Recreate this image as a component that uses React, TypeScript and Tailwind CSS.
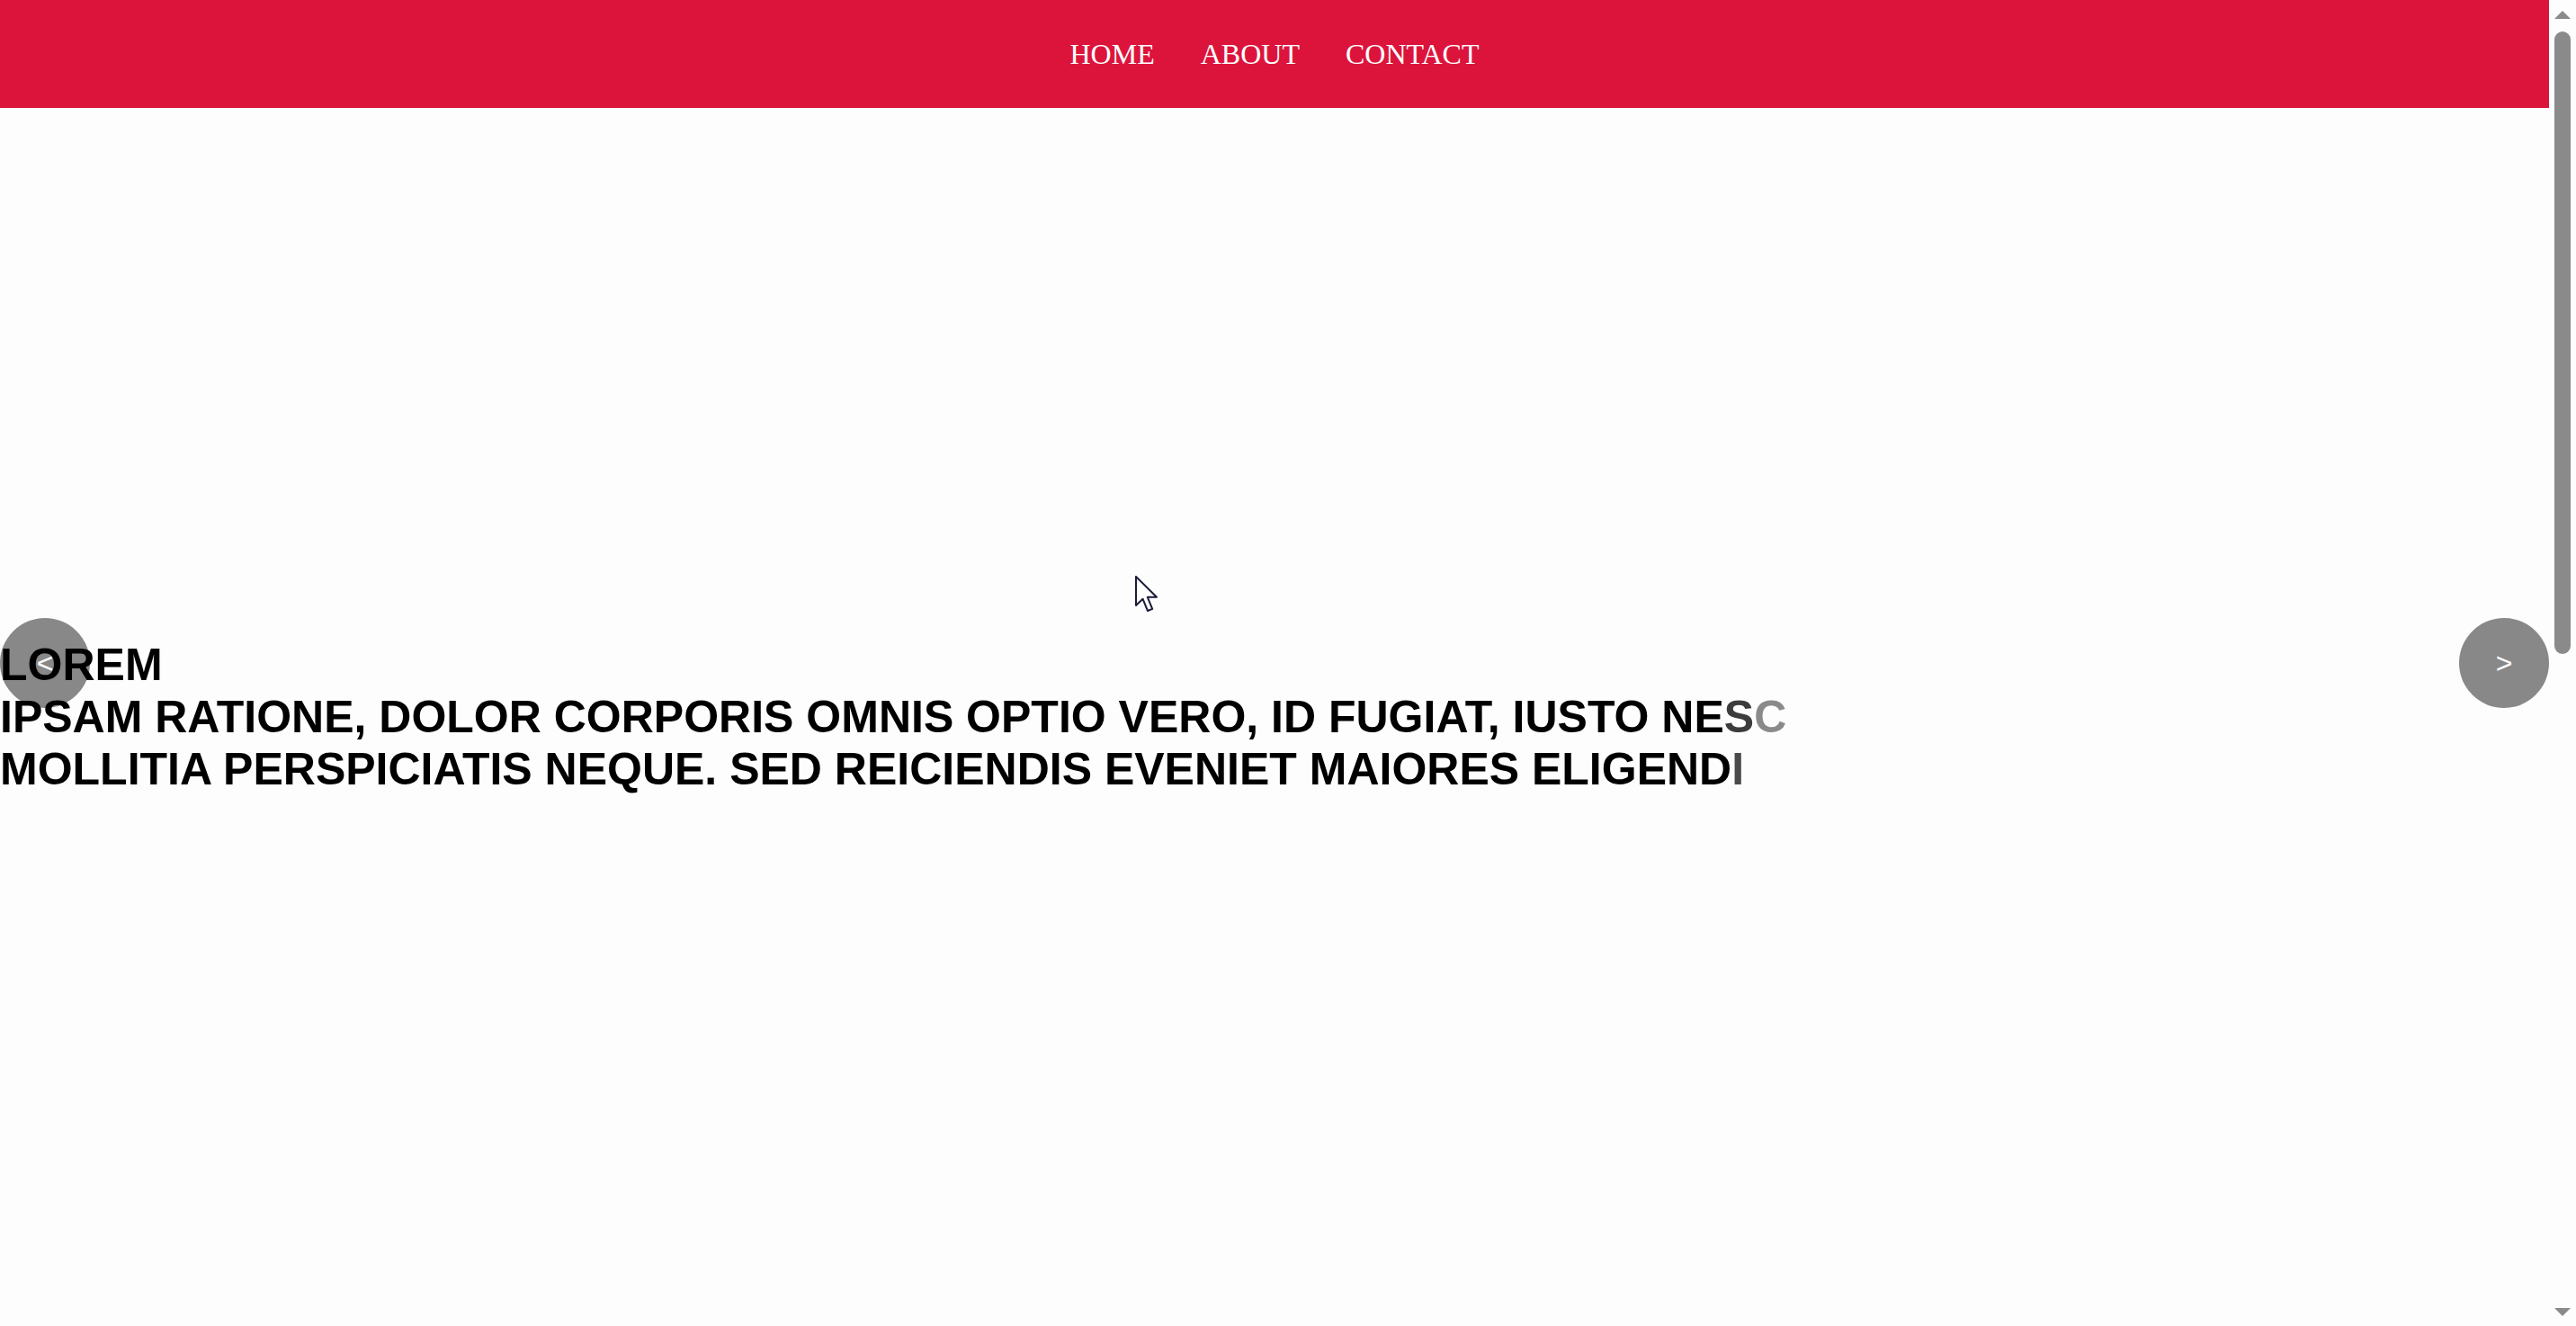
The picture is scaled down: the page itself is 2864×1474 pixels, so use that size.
const links = ['HOME', 'ABOUT', 'CONTACT'];

const ScrollArrow = ({ down }: { down?: boolean }) => (
  <svg width="18" height="9" viewBox="0 0 18 9" className="shrink-0">
    <polygon points={down ? '0,0 18,0 9,9' : '9,0 18,9 0,9'} fill="#8a8a8a" />
  </svg>
);

const Cursor = () => (
  <svg
    width="28"
    height="42"
    viewBox="0 0 14 21"
    className="pointer-events-none absolute left-[1262px] top-[640px] z-20"
  >
    <path
      d="M0.5 0.5 L0.5 16.5 L4.3 12.9 L7 19.5 L9.6 18.4 L6.9 11.9 L12 11.9 Z"
      fill="#ffffff"
      stroke="#1b1b3a"
      strokeWidth="1"
      strokeLinejoin="round"
    />
  </svg>
);

const App = () => {
  return (
    <div className="flex h-screen w-full overflow-hidden bg-[#fdfdfd]">
      <div className="relative flex min-w-0 flex-1 flex-col">
        <nav className="flex h-[120px] shrink-0 items-center justify-center gap-[51px] bg-[#dc143c]">
          {links.map((link) => (
            <a
              key={link}
              href="#"
              className="font-['Liberation_Serif',serif] text-[32px] leading-[37px] text-white"
            >
              {link}
            </a>
          ))}
        </nav>

        <main className="flex flex-1 items-center">
          <div className="relative z-10 font-['Liberation_Sans',Arial,sans-serif] text-[50px] font-bold uppercase leading-[58px] text-black">
            <p>Lorem</p>
            <p>
              Ipsam ratione, dolor corporis omnis optio vero, id fugiat, iusto ne
              <span className="text-[#3c3c3c]">s</span>
              <span className="text-[#8a8a8a]">c</span>
            </p>
            <p>
              Mollitia perspiciatis neque. Sed reiciendis eveniet maiores eligend
              <span className="text-[#4a4a4a]">i</span>
            </p>
          </div>
        </main>

        <button className="absolute left-0 top-[687px] z-0 flex h-[100px] w-[100px] items-center justify-center rounded-full bg-[#888888] font-['Liberation_Sans',Arial,sans-serif] text-[32px] text-white">
          &lt;
        </button>
        <button className="absolute right-0 top-[687px] z-0 flex h-[100px] w-[100px] items-center justify-center rounded-full bg-[#888888] font-['Liberation_Sans',Arial,sans-serif] text-[32px] text-white">
          &gt;
        </button>

        <Cursor />
      </div>

      <div className="flex w-[30px] shrink-0 flex-col items-center bg-[#fdfdfd] pb-[11px] pt-[12px]">
        <ScrollArrow />
        <div className="mt-[14px] h-[692px] w-[18px] rounded-full bg-[#8a8a8a]" />
        <div className="flex-1" />
        <ScrollArrow down />
      </div>
    </div>
  );
};

export default App;
